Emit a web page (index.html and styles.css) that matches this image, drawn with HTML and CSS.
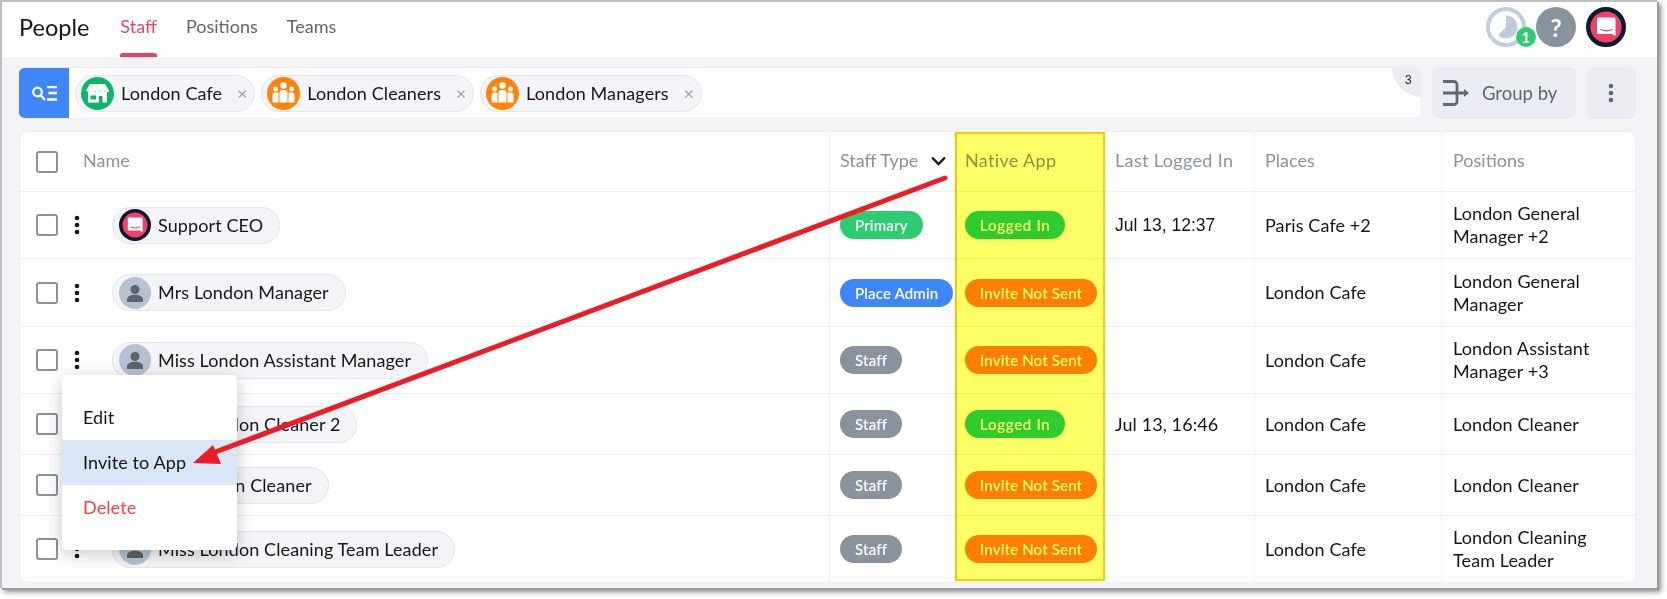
FILE: index.html
```html
<!DOCTYPE html>
<html lang="en">
<head>
<meta charset="utf-8">
<title>People</title>
<link rel="stylesheet" href="styles.css">
</head>
<body>
<svg class="defs" width="0" height="0" aria-hidden="true">
  <symbol id="i-brand" viewBox="0 0 40 40">
    <circle cx="20" cy="20" r="17.800" fill="#f0416b" stroke="#0c1a30" stroke-width="4.400"/>
    <path d="M12.500 10.500h15.500a1.500 1.500 0 0 1 1.500 1.500v17l-3.500-2H12.500a1.500 1.500 0 0 1-1.500-1.500V12a1.500 1.500 0 0 1 1.500-1.500z" fill="#fff"/>
    <path d="M15 22.500q5.500 2.500 11 0" fill="none" stroke="#f0416b" stroke-width="1.300" stroke-linecap="round"/>
  </symbol>
  <symbol id="i-person" viewBox="0 0 32 32">
    <circle cx="16" cy="16" r="16" fill="#b6c2d1"/>
    <circle cx="16" cy="12.500" r="4.500" fill="#5f6368"/>
    <path d="M8 25v-2.500c0-3 3.500-4.800 8-4.800s8 1.800 8 4.800V25z" fill="#5f6368"/>
  </symbol>
  <symbol id="i-team" viewBox="0 0 33 33">
    <circle cx="16.500" cy="16.500" r="16.500" fill="#ff8209"/>
    <g fill="#fff">
      <circle cx="16.500" cy="8.500" r="3.300"/>
      <circle cx="8.500" cy="12" r="2.500"/>
      <circle cx="24.500" cy="12" r="2.500"/>
      <path d="M12.500 16a3 3 0 0 1 3-3h2a3 3 0 0 1 3 3v9.500h-8z"/>
      <path d="M5.500 18a2.500 2.500 0 0 1 2.500-2.500h3.500v10h-6z"/>
      <path d="M21.500 15.500H25a2.500 2.500 0 0 1 2.500 2.500v7.500h-6z"/>
    </g>
  </symbol>
  <symbol id="i-store" viewBox="0 0 33 33">
    <circle cx="16.500" cy="16.500" r="16.500" fill="#0cb56c"/>
    <path d="M9 7h15l4 6.500c0 1.200-1 2-2.300 2s-2.100-.7-2.300-1.500c-.3.800-1.200 1.500-2.300 1.500s-2-.7-2.300-1.500c-.3.800-1.200 1.500-2.300 1.500s-2-.7-2.300-1.500c-.3.800-1.200 1.500-2.300 1.500S5 14.700 5 13.500z" fill="#fff"/>
    <path fill-rule="evenodd" d="M7 15h19v10.500h-4.500V19h-3.500v6.500H7zM9.500 18.500v4h5.500v-4z" fill="#fff"/>
  </symbol>
  <symbol id="i-dots" viewBox="0 0 6 20">
    <circle cx="3" cy="3" r="2.300"/><circle cx="3" cy="10" r="2.300"/><circle cx="3" cy="17" r="2.300"/>
  </symbol>
</svg>

<div class="window">
  <header class="topbar">
    <h1 class="title">People</h1>
    <nav class="tabs">
      <a class="tab tab-active">Staff</a>
      <a class="tab">Positions</a>
      <a class="tab">Teams</a>
    </nav>
    <div class="top-actions">
      <div class="clock">
        <svg class="clock-icon" viewBox="0 0 40 40">
          <circle cx="20" cy="20" r="18" fill="none" stroke="#c3cfdc" stroke-width="4"/>
          <path d="M20 8.500a11.500 11.500 0 1 1-8 19.800l8-8.300z" fill="#bfcbd9"/>
        </svg>
        <span class="clock-badge">1</span>
      </div>
      <div class="help">?</div>
      <svg class="top-avatar"><use href="#i-brand"/></svg>
    </div>
  </header>

  <main class="content">
    <section class="toolbar">
      <div class="searchbar">
        <div class="search-btn">
          <svg viewBox="0 0 25 15" width="25" height="15" fill="none" stroke="#fff" stroke-width="2.300">
            <circle cx="5.500" cy="6" r="4.300"/>
            <path d="M9 9.500l3.300 3.800" stroke-linecap="round"/>
            <path d="M15 1.200h10M16.500 7h8.500M15 13.500h10"/>
          </svg>
        </div>
        <div class="filter"><svg class="filter-icon"><use href="#i-store"/></svg><span>London Cafe</span><i class="x">×</i></div>
        <div class="filter"><svg class="filter-icon"><use href="#i-team"/></svg><span>London Cleaners</span><i class="x">×</i></div>
        <div class="filter"><svg class="filter-icon"><use href="#i-team"/></svg><span>London Managers</span><i class="x">×</i></div>
        <span class="count">3</span>
      </div>
      <button class="group-btn">
        <svg viewBox="0 0 26 26" width="26" height="26" fill="none" stroke="#606a75" stroke-width="2.800">
          <path d="M0 1.500h11a3 3 0 0 1 3 3v17a3 3 0 0 1-3 3H0M0 13h22"/>
          <path d="M21 9l5 4-5 4z" fill="#606a75" stroke="none"/>
        </svg>
        <span>Group by</span>
      </button>
      <button class="more-btn"><svg class="more-dots"><use href="#i-dots"/></svg></button>
    </section>

    <section class="table">
      <div class="row head">
        <div class="cell first"><span class="check"></span><span class="head-name">Name</span></div>
        <div class="cell">Staff Type
          <svg class="chev" viewBox="0 0 15 10" width="15" height="10" fill="none" stroke="#1c1414" stroke-width="2.300"><path d="M1 1.500l6.500 6.500L14 1.500"/></svg>
        </div>
        <div class="cell">Native App</div>
        <div class="cell">Last Logged In</div>
        <div class="cell">Places</div>
        <div class="cell">Positions</div>
      </div>

      <div class="row">
        <div class="cell first"><span class="check"></span><svg class="dots"><use href="#i-dots"/></svg>
          <div class="person"><svg class="avatar"><use href="#i-brand"/></svg>Support CEO</div></div>
        <div class="cell"><span class="pill primary">Primary</span></div>
        <div class="cell"><span class="pill ok">Logged In</span></div>
        <div class="cell arial">Jul 13, 12:37</div>
        <div class="cell">Paris Cafe +2</div>
        <div class="cell">London General Manager +2</div>
      </div>

      <div class="row">
        <div class="cell first"><span class="check"></span><svg class="dots"><use href="#i-dots"/></svg>
          <div class="person"><svg class="avatar"><use href="#i-person"/></svg>Mrs London Manager</div></div>
        <div class="cell"><span class="pill admin">Place Admin</span></div>
        <div class="cell"><span class="pill warn">Invite Not Sent</span></div>
        <div class="cell"></div>
        <div class="cell">London Cafe</div>
        <div class="cell">London General Manager</div>
      </div>

      <div class="row">
        <div class="cell first"><span class="check"></span><svg class="dots"><use href="#i-dots"/></svg>
          <div class="person"><svg class="avatar"><use href="#i-person"/></svg>Miss London Assistant Manager</div></div>
        <div class="cell"><span class="pill staff">Staff</span></div>
        <div class="cell"><span class="pill warn">Invite Not Sent</span></div>
        <div class="cell"></div>
        <div class="cell">London Cafe</div>
        <div class="cell">London Assistant Manager +3</div>
      </div>

      <div class="row">
        <div class="cell first"><span class="check"></span><svg class="dots"><use href="#i-dots"/></svg>
          <div class="person"><svg class="avatar"><use href="#i-person"/></svg>Miss London Cleaner 2</div></div>
        <div class="cell"><span class="pill staff">Staff</span></div>
        <div class="cell"><span class="pill ok">Logged In</span></div>
        <div class="cell">Jul 13, 16:46</div>
        <div class="cell">London Cafe</div>
        <div class="cell">London Cleaner</div>
      </div>

      <div class="row">
        <div class="cell first"><span class="check"></span><svg class="dots"><use href="#i-dots"/></svg>
          <div class="person"><svg class="avatar"><use href="#i-person"/></svg>Mr London Cleaner</div></div>
        <div class="cell"><span class="pill staff">Staff</span></div>
        <div class="cell"><span class="pill warn">Invite Not Sent</span></div>
        <div class="cell"></div>
        <div class="cell">London Cafe</div>
        <div class="cell">London Cleaner</div>
      </div>

      <div class="row">
        <div class="cell first"><span class="check"></span><svg class="dots"><use href="#i-dots"/></svg>
          <div class="person"><svg class="avatar"><use href="#i-person"/></svg>Miss London Cleaning Team Leader</div></div>
        <div class="cell"><span class="pill staff">Staff</span></div>
        <div class="cell"><span class="pill warn">Invite Not Sent</span></div>
        <div class="cell"></div>
        <div class="cell">London Cafe</div>
        <div class="cell">London Cleaning Team Leader</div>
      </div>
    </section>
  </main>

  <div class="menu">
    <div class="menu-item">Edit</div>
    <div class="menu-item menu-active">Invite to App</div>
    <div class="menu-item menu-danger">Delete</div>
  </div>

  <div class="highlight"></div>

  <svg class="arrow" viewBox="0 0 1667 599" width="1667" height="599">
    <path d="M945 178L210 454" stroke="#ed1c24" stroke-width="5" stroke-linecap="round" fill="none"/>
    <path d="M193 463l20-18 8 19z" fill="#ed1c24"/>
  </svg>
</div>
</body>
</html>
```

FILE: styles.css
```css
* { box-sizing: border-box; }

html, body {
  margin: 0;
  height: 100%;
  background: #fff;
  overflow: hidden;
}

body {
  font-family: "Lato", "Liberation Sans", sans-serif;
  font-size: 18px;
  letter-spacing: .1px;
  color: #1a1414;
}

.defs { position: absolute; }

.window {
  position: relative;
  width: 1657px;
  height: 588px;
  border-top: 2px solid #bfbfbf;
  border-left: 2px solid #bfbfbf;
  background: #f3f4f8;
  box-shadow: 2px 2px 0 #9a9a9a, 4px 4px 5px rgba(0, 0, 0, .45);
  display: flex;
  flex-direction: column;
}

/* top bar */
.topbar {
  height: 55px;
  flex: none;
  background: #fff;
  display: flex;
  align-items: stretch;
  padding: 0 31px 0 17px;
}

.title {
  margin: 0 31px 0 0;
  font-size: 23.500px;
  font-weight: 400;
  line-height: 50px;
  letter-spacing: 0;
}

.tabs { display: flex; gap: 29px; }

.tab {
  display: block;
  height: 55px;
  line-height: 49px;
  font-size: 18px;
  letter-spacing: 0;
  color: #5d6672;
  position: relative;
}

.tab-active { color: #f0416b; }

.tab-active::after {
  content: "";
  position: absolute;
  left: 0;
  right: 0;
  bottom: 0;
  height: 4px;
  border-radius: 3px 3px 0 0;
  background: #ea3c66;
}

.top-actions {
  margin-left: auto;
  display: flex;
  gap: 10px;
  padding-top: 5px;
}

.clock { position: relative; width: 40px; height: 40px; }
.clock-icon { width: 40px; height: 40px; display: block; }

.clock-badge {
  position: absolute;
  right: -10px;
  bottom: 0;
  width: 20px;
  height: 20px;
  border-radius: 50%;
  background: #2ecc71;
  color: #fff;
  font-size: 15px;
  font-weight: 700;
  line-height: 20px;
  text-align: center;
}

.help {
  width: 40px;
  height: 40px;
  border-radius: 50%;
  background: #8a929e;
  color: #fff;
  font-size: 25px;
  font-weight: 700;
  line-height: 40px;
  text-align: center;
}

.top-avatar { width: 40px; height: 40px; display: block; }

/* main */
.content {
  flex: 1;
  padding: 10px 21px 0 17px;
  display: flex;
  flex-direction: column;
  gap: 12px;
}

.toolbar { display: flex; gap: 10px; height: 52px; flex: none; }

.searchbar {
  position: relative;
  overflow: hidden;
  width: 1403px;
  background: #fff;
  border-radius: 6px;
  border: 1px solid #eceef2;
  border-left: 0;
  display: flex;
  align-items: center;
  gap: 6px;
}

.search-btn {
  width: 50px;
  align-self: stretch;
  margin: -1px 0;
  background: #3f86fb;
  display: flex;
  align-items: center;
  justify-content: center;
}

.filter {
  height: 37px;
  padding: 0 5px 0 5px;
  display: flex;
  align-items: center;
  background: #f3f4f8;
  border: 1px solid #e3e5ea;
  border-radius: 19px;
  white-space: nowrap;
}

.filter-icon { width: 33px; height: 33px; margin-right: 7px; }

.x {
  font-style: normal;
  color: #9aa0a8;
  font-size: 18px;
  margin-left: 13px;
  width: 14px;
  text-align: center;
}

.count {
  position: absolute;
  top: -31px;
  right: -31px;
  width: 60px;
  height: 60px;
  border-radius: 50%;
  background: #ebecf0;
  font: 12px "Liberation Sans", sans-serif;
  color: #222;
  padding: 36px 0 0 13px;
}

.group-btn, .more-btn {
  border: 0;
  background: #ebecf1;
  border-radius: 8px;
  display: flex;
  align-items: center;
  font-family: inherit;
  padding: 0;
}

.group-btn {
  width: 144px;
  padding-left: 11px;
  gap: 13px;
  font-size: 18.500px;
  color: #5d6672;
}

.more-btn { width: 50px; justify-content: center; }

.more-dots { width: 6px; height: 20px; fill: #606a75; }

/* table */
.table {
  height: 452px;
  background: #fff;
  border: 1px solid #eceef2;
  border-radius: 8px;
  display: grid;
  grid-template-rows: 60px 67px 68px 67px 61px 61px 66px;
}

.row {
  display: grid;
  grid-template-columns: 809px 126px 150px 149px 187px 194px;
  border-bottom: 1px solid #eff0f4;
}

.row:last-child { border-bottom: 0; }

.cell {
  display: flex;
  align-items: center;
  padding: 0 10px;
  border-left: 1px solid #f0f1f4;
  line-height: 23px;
}

.cell:nth-child(3), .cell:nth-child(4) { padding-left: 9px; }
.cell:nth-child(6) { padding-left: 11px; padding-right: 6px; }

.first { border-left: 0; padding: 0 0 0 16px; }

.arial { font-family: "Liberation Sans", sans-serif; font-size: 17.500px; letter-spacing: 0; }

.head .cell { color: #8a929e; padding-bottom: 2px; padding-right: 0; letter-spacing: 0; white-space: nowrap; }
.head .cell:nth-child(3), .head .cell:nth-child(4) { letter-spacing: .35px; }
.head-name { margin-left: 25px; }
.head .check { margin-top: 2px; }
.chev { margin-left: 13px; flex: none; }

.check {
  width: 22px;
  height: 22px;
  flex: none;
  border: 2px solid #8a929e;
  border-radius: 3px;
  background: #fff;
}

.dots { width: 6px; height: 20px; fill: #1a1414; margin-left: 16px; flex: none; }

.person {
  margin-left: 32px;
  height: 37px;
  display: flex;
  align-items: center;
  padding: 0 16px 0 6px;
  gap: 7px;
  background: #f3f4f8;
  border: 1px solid #e3e5ea;
  border-radius: 19px;
  white-space: nowrap;
}

.avatar { width: 32px; height: 32px; flex: none; }

.pill {
  height: 28px;
  border-radius: 14px;
  padding: 0 15px;
  color: #fff;
  font-size: 15px;
  font-weight: 600;
  line-height: 28px;
  letter-spacing: .15px;
  white-space: nowrap;
}

.primary { background: #2ecc71; }
.ok { background: #2ecc71; letter-spacing: .7px; }
.admin { background: #3f86fb; }
.staff { background: #8a929e; }
.warn { background: #ff7f0a; }

/* overlays */
.menu {
  position: absolute;
  left: 60px;
  top: 373px;
  width: 175px;
  height: 175px;
  padding: 20px 0;
  background: #fff;
  border-radius: 5px;
  box-shadow: 0 4px 18px rgba(0, 0, 0, .22);
}

.menu-item {
  height: 45px;
  line-height: 44px;
  padding-left: 21px;
}

.menu-active { background: #d9e6f8; }
.menu-danger { color: #fa3e3e; }

.highlight {
  position: absolute;
  left: 953px;
  top: 130px;
  width: 150px;
  height: 449px;
  background: #ffff66;
  border: 2px solid #ffcc00;
  mix-blend-mode: multiply;
}

.arrow {
  position: absolute;
  left: -2px;
  top: -2px;
  pointer-events: none;
}
```
